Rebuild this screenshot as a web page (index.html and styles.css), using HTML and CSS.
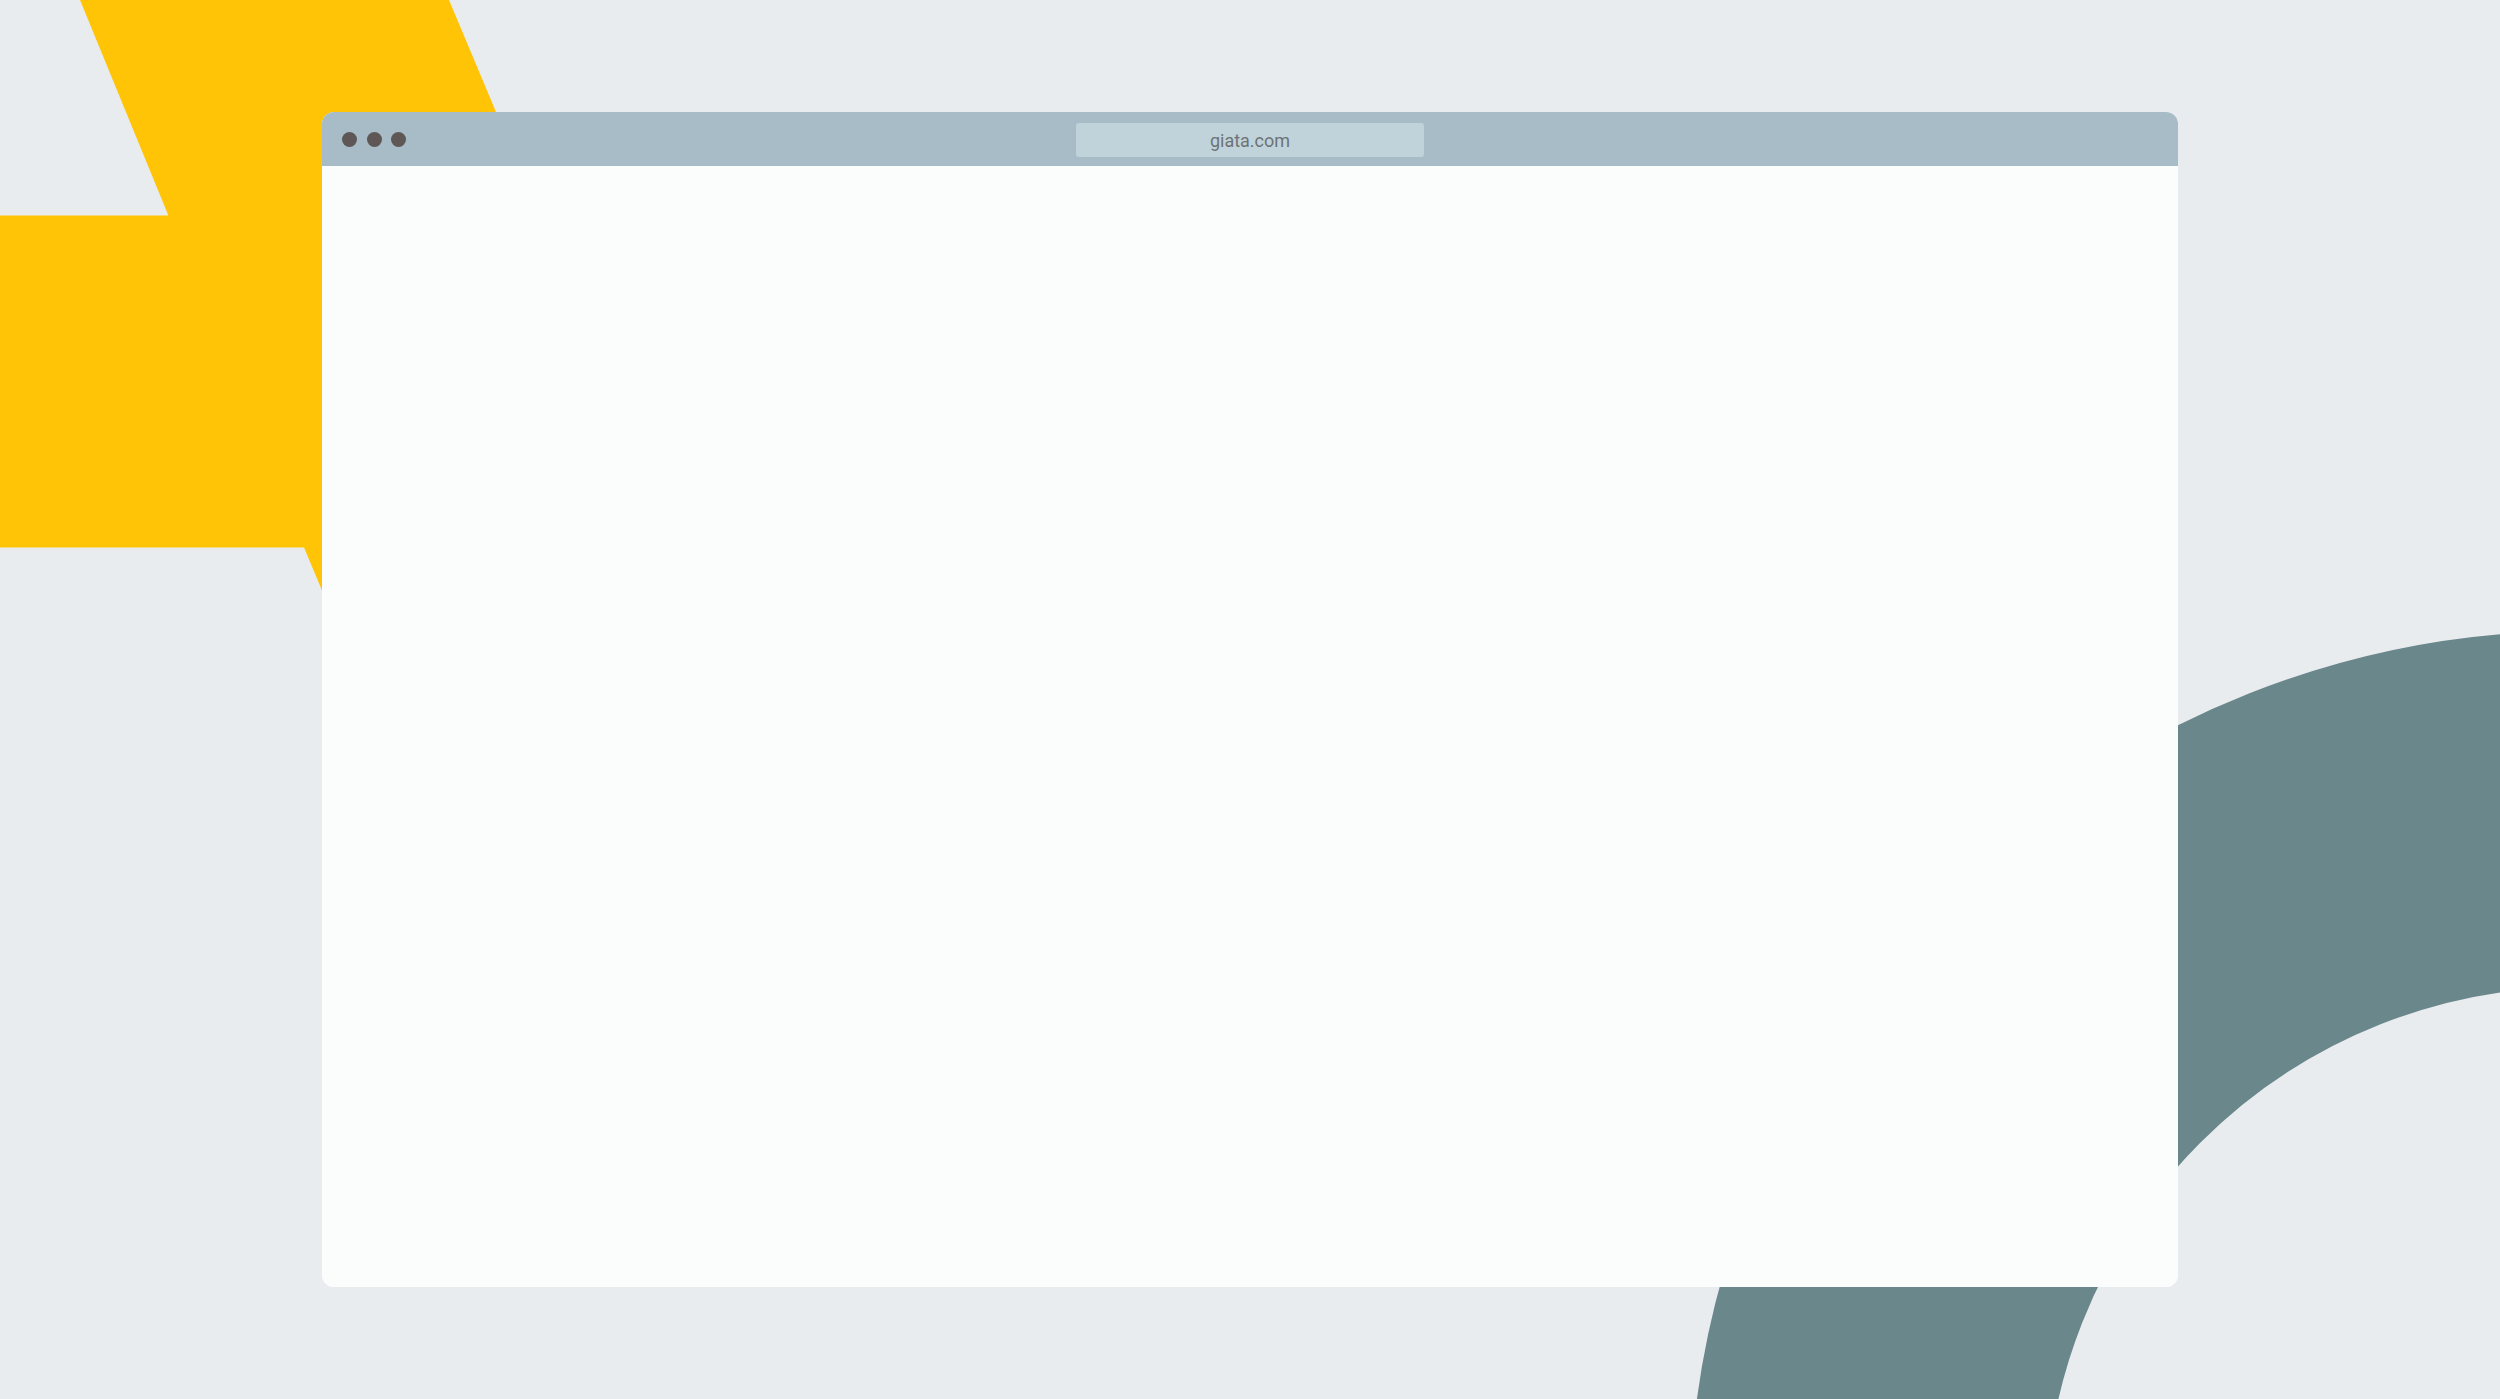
FILE: index.html
```html
<!DOCTYPE html>
<html lang="en">
<head>
<meta charset="utf-8">
<title>giata.com</title>
<link rel="stylesheet" href="styles.css">
</head>
<body>
<svg class="backdrop" viewBox="0 0 2500 1399" width="2500" height="1399" aria-hidden="true">
  <polygon class="bolt" points="80,0 449,0 701,600 326,600 304,547.6 0,547.6 0,215.5 168.4,215.5"/>
  <circle class="ring" cx="2576" cy="1518" r="709"/>
</svg>
<main class="browser">
  <header class="titlebar">
    <div class="dots">
      <span class="dot"></span>
      <span class="dot"></span>
      <span class="dot"></span>
    </div>
    <div class="url">giata.com</div>
    <div class="spacer"></div>
  </header>
  <section class="viewport"></section>
</main>
</body>
</html>
```
FILE: styles.css
```css
html, body {
  margin: 0;
  padding: 0;
}
body {
  width: 2500px;
  height: 1399px;
  background: #e9ecef;
  display: flex;
  align-items: center;
  justify-content: center;
  overflow: hidden;
  position: relative;
  font-family: Roboto, "Liberation Sans", Arial, sans-serif;
}
.backdrop {
  position: absolute;
  left: 0;
  top: 0;
  z-index: 0;
}
.bolt {
  fill: #ffc406;
}
.ring {
  fill: none;
  stroke: #6a878c;
  stroke-width: 356;
}
.browser {
  position: relative;
  z-index: 1;
  width: 1856px;
  height: 1175px;
  border-radius: 12px;
  overflow: hidden;
  display: flex;
  flex-direction: column;
  background: #fbfcfc;
}
.titlebar {
  height: 54px;
  flex: 0 0 54px;
  background: #a7bcc6;
  display: grid;
  grid-template-columns: 1fr 348px 1fr;
  align-items: center;
}
.dots {
  display: flex;
  gap: 9.5px;
  padding-left: 20px;
  padding-top: 1px;
}
.dot {
  width: 15px;
  height: 15px;
  border-radius: 50%;
  background: #5e5756;
}
.url {
  height: 34px;
  margin-top: 2px;
  background: #c0d3db;
  border-radius: 3px;
  display: flex;
  align-items: center;
  justify-content: center;
  font-size: 18px;
  color: #6d7375;
}
.viewport {
  flex: 1;
  background: #fbfcfc;
}
```
